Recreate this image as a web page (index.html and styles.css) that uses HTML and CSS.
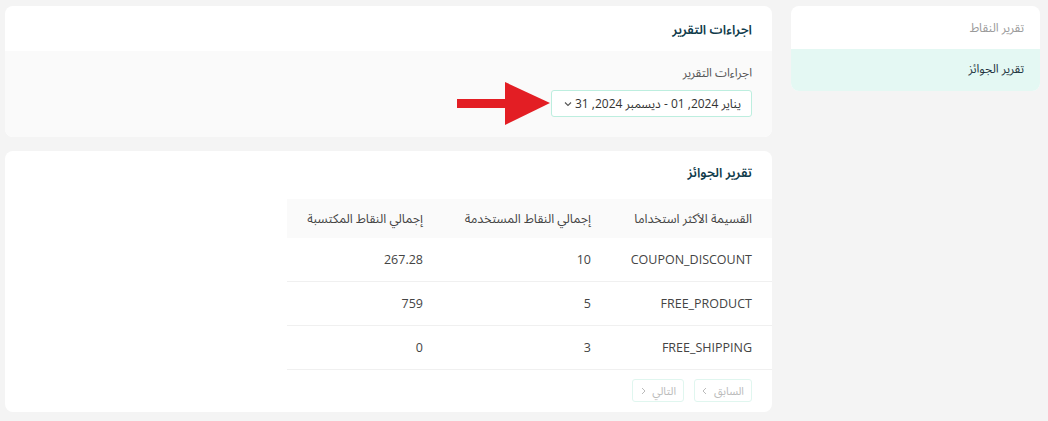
FILE: index.html
```html
<!DOCTYPE html>
<html lang="ar" dir="rtl">
<head>
    <meta charset="UTF-8">
    <meta name="viewport" content="width=device-width, initial-scale=1.0">
    <title>تقرير الجوائز</title>
    <link rel="stylesheet" href="styles.css">
</head>
<body>
    <div class="layout">
        <aside class="side-menu">
            <a class="menu-item" href="#">تقرير النقاط</a>
            <a class="menu-item active" href="#">تقرير الجوائز</a>
        </aside>

        <main class="content">
            <section class="card">
                <div class="card-head">
                    <h2>اجراءات التقرير</h2>
                </div>
                <div class="card-body filters">
                    <label class="field-label">اجراءات التقرير</label>
                    <div class="range-wrap">
                        <button class="range-picker">
                            <span>يناير 2024, 01 - ديسمبر 2024, 31</span>
                            <svg class="chev" width="10" height="10" viewBox="0 0 10 10"><path d="M2 3.5 L5 6.5 L8 3.5" fill="none" stroke="#555" stroke-width="1.1"/></svg>
                        </button>
                        <!-- pointer drawn over the card -->
                        <svg class="pointer-arrow" width="93" height="43" viewBox="0 0 93 43">
                            <rect x="0" y="17" width="50" height="9" fill="#e31e24"/>
                            <polygon points="48,0 93,21 48,43" fill="#e31e24"/>
                        </svg>
                    </div>
                </div>
            </section>

            <section class="card">
                <div class="card-head plain">
                    <h2>تقرير الجوائز</h2>
                </div>
                <table class="rewards">
                    <colgroup>
                        <col class="col-coupon">
                        <col class="col-used">
                        <col class="col-earned">
                    </colgroup>
                    <thead>
                        <tr>
                            <th>القسيمة الأكثر استخداما</th>
                            <th>إجمالي النقاط المستخدمة</th>
                            <th>إجمالي النقاط المكتسبة</th>
                        </tr>
                    </thead>
                    <tbody>
                        <tr><td>COUPON_DISCOUNT</td><td>10</td><td>267.28</td></tr>
                        <tr><td>FREE_PRODUCT</td><td>5</td><td>759</td></tr>
                        <tr><td>FREE_SHIPPING</td><td>3</td><td>0</td></tr>
                    </tbody>
                </table>
                <div class="pager">
                    <button class="page-btn" disabled>
                        <span>السابق</span>
                        <svg width="8" height="8" viewBox="0 0 8 8"><path d="M5 1 L2 4 L5 7" fill="none" stroke="#bbb" stroke-width="1"/></svg>
                    </button>
                    <button class="page-btn" disabled>
                        <span>التالي</span>
                        <svg width="8" height="8" viewBox="0 0 8 8"><path d="M3 1 L6 4 L3 7" fill="none" stroke="#bbb" stroke-width="1"/></svg>
                    </button>
                </div>
            </section>
        </main>
    </div>
</body>
</html>
```

FILE: styles.css
```css
body {
    margin: 0;
    background: #f4f4f4;
    font-family: 'Open Sans', 'Noto Sans Arabic', 'DejaVu Sans', sans-serif;
    font-size: 13px;
    line-height: 16px;
    color: #444;
}

.layout {
    display: flex;
    align-items: flex-start;
    gap: 19px;
    padding: 6px 8px 10px 5px;
}

/* sidebar */
.side-menu {
    width: 249px;
    flex-shrink: 0;
    background: #fff;
    border-radius: 8px;
    overflow: hidden;
    display: flex;
    flex-direction: column;
}

.menu-item {
    display: flex;
    align-items: center;
    padding: 0 16px;
    height: 43px;
    color: #9a9a9a;
    text-decoration: none;
    font-size: 12px;
}

.menu-item.active {
    height: 42px;
    padding-bottom: 2px;
    box-sizing: border-box;
    background: #e4f8f3;
    color: #1f3440;
}

.content {
    flex: 1;
    display: flex;
    flex-direction: column;
    gap: 14px;
}

.card {
    background: #fff;
    border-radius: 8px;
    overflow: hidden;
}

.card-head {
    height: 45px;
    box-sizing: border-box;
    display: flex;
    align-items: center;
    padding: 0 20px;
}

.card-head.plain {
    height: 48px;
    padding-bottom: 6px;
}

.card-head h2 {
    margin: 0;
    font-size: 13px;
    line-height: 18px;
    font-weight: 600;
    color: #0f3b4b;
}

.card-body {
    background: #fafafa;
}

.filters {
    padding: 14px 20px 20px;
    display: flex;
    flex-direction: column;
    align-items: flex-start;
}

.field-label {
    font-size: 12px;
    color: #555;
    margin-bottom: 9px;
}

.range-wrap {
    position: relative;
}

.range-picker {
    width: 201px;
    height: 27px;
    display: flex;
    align-items: center;
    justify-content: space-between;
    padding: 0 10px 0 11px;
    background: #fff;
    border: 1px solid #bdeedf;
    border-radius: 3px;
    font-family: inherit;
    font-size: 12px;
    line-height: 16px;
    color: #333;
}

.pointer-arrow {
    position: absolute;
    right: calc(100% + 1px);
    top: -8px;
}

/* table */
.rewards {
    width: 485px;
    border-collapse: collapse;
    table-layout: fixed;
}

.col-coupon { width: 161px; }
.col-used { width: 168px; }
.col-earned { width: 156px; }

.rewards th,
.rewards td {
    text-align: right;
    padding: 0 20px;
    font-weight: normal;
    white-space: nowrap;
    font-size: 12.5px;
    color: #444;
}

.rewards th {
    height: 39px;
    background: #fafafa;
}

.rewards td {
    height: 43px;
    border-bottom: 1px solid #f0f0f0;
}

.pager {
    display: flex;
    gap: 10px;
    padding: 9px 20px 10px;
}

.page-btn {
    height: 23px;
    display: flex;
    align-items: center;
    gap: 5px;
    padding: 0 7px 0 6px;
    background: #fff;
    border: 1px solid #e0f6ef;
    border-radius: 3px;
    font-family: inherit;
    font-size: 11px;
    line-height: 14px;
    color: #bbb;
}
```
